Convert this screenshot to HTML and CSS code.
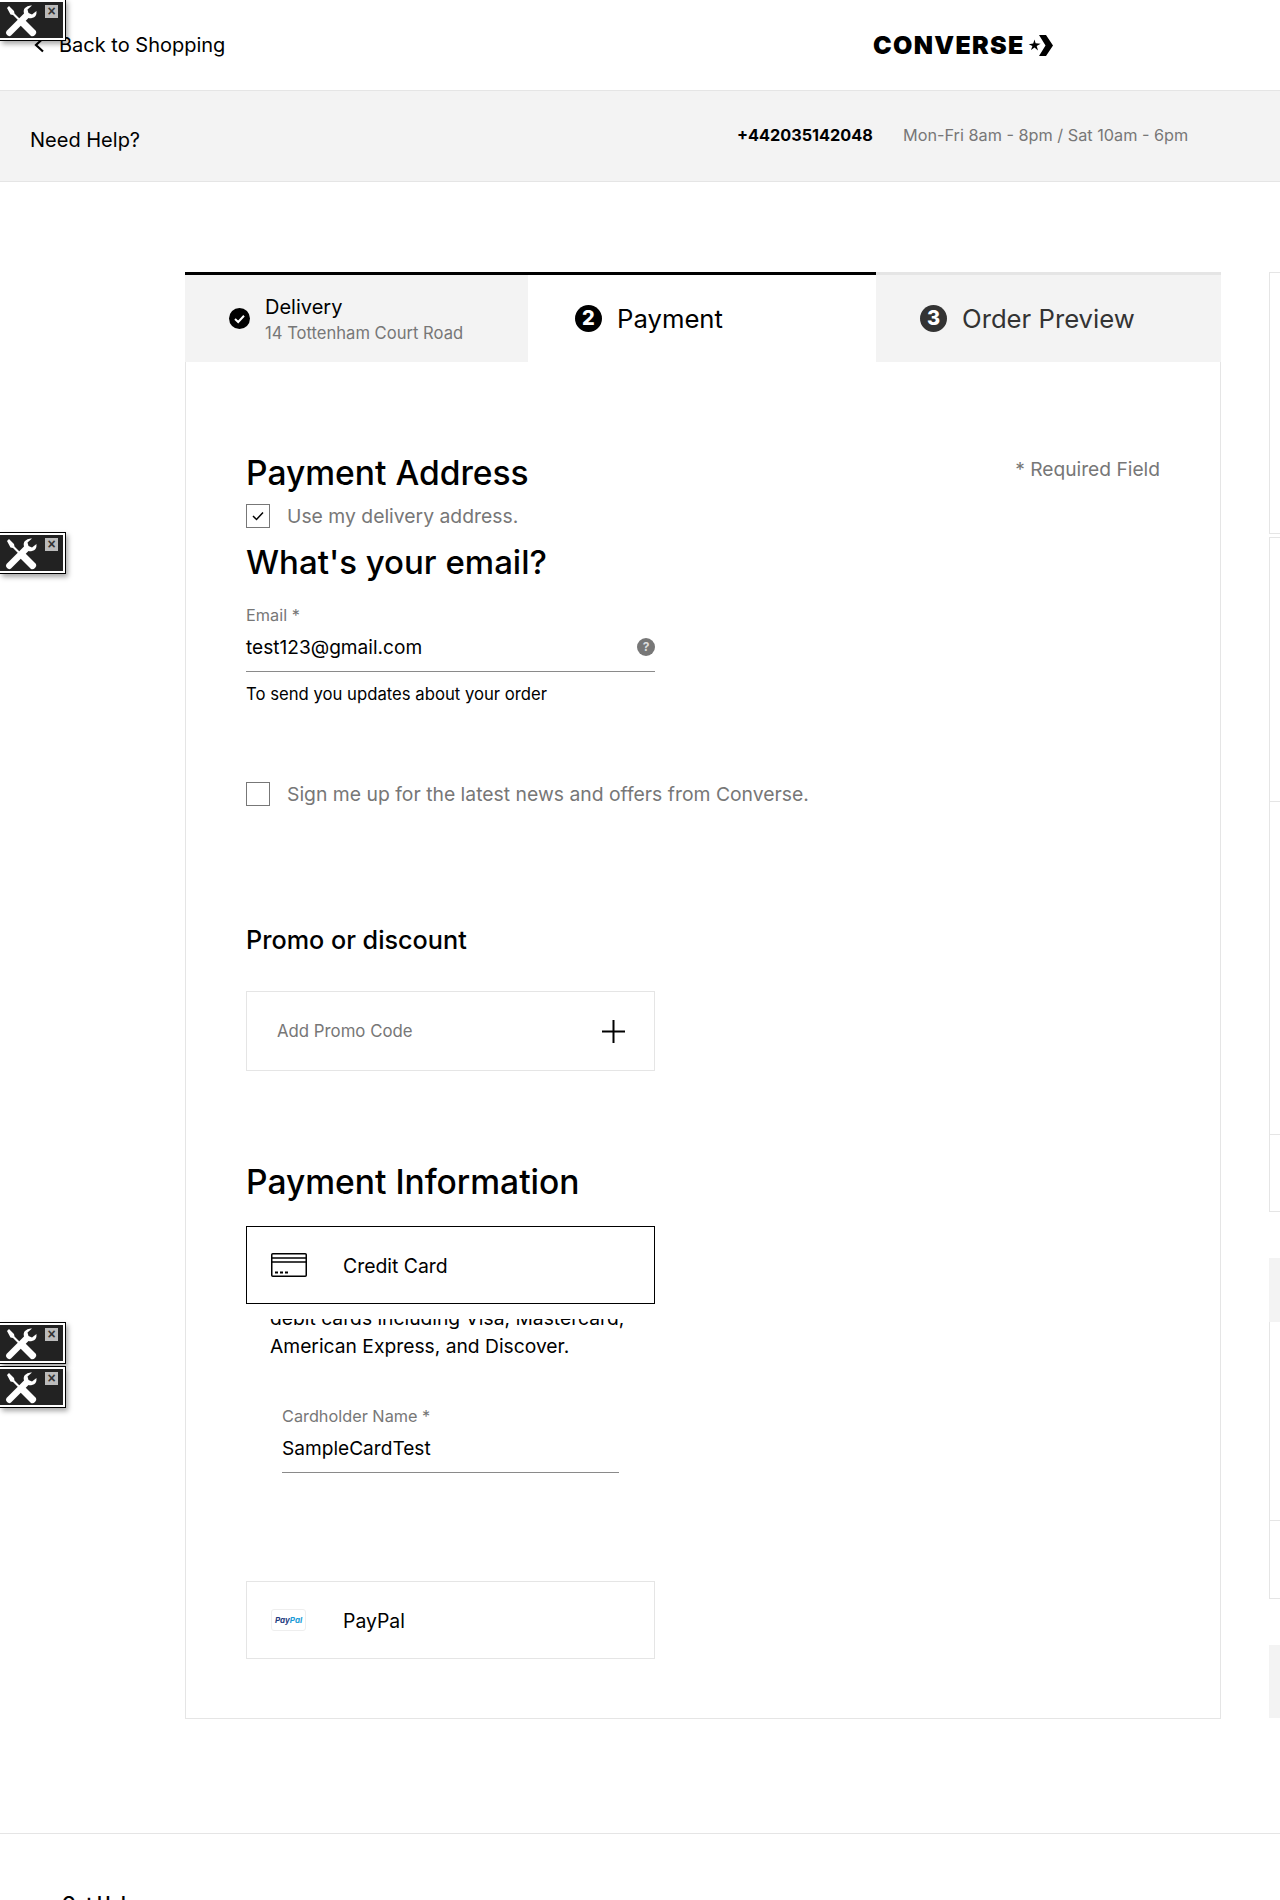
FILE: index.html
```html
<!DOCTYPE html>
<html lang="en">
<head>
<meta charset="utf-8">
<title>Converse Checkout</title>
<link rel="stylesheet" href="styles.css">
</head>
<body>
<svg class="defs" width="0" height="0" aria-hidden="true">
  <symbol id="tools" viewBox="0 0 32 32">
    <path d="M2 3 L4 1 L9 6 L9.5 8.5 L19 18 L17.5 19.5 L8 10 L5.5 9.5 Z" fill="#fff"/>
    <path d="M18 17 L20 15 L31 26 Q32 28 30 30 Q28 32 26 31 L15 20 Z" fill="#fff"/>
    <path d="M31.5 6 Q32 12 27 13 Q25 13.5 23.5 13 L6 30.5 Q4 32 2 30 Q0 28 1.5 26 L19 8.5 Q18 5 20 3 Q22.5 0 27 0.5 L22.5 4.5 L23.5 8 L27 9.5 Z" fill="#fff"/>
  </symbol>
</svg>

<div class="devtool devtool-a"><svg class="devtool-icon"><use href="#tools"/></svg><span class="devtool-close">×</span></div>
<div class="devtool devtool-b"><svg class="devtool-icon"><use href="#tools"/></svg><span class="devtool-close">×</span></div>
<div class="devtool devtool-c"><svg class="devtool-icon"><use href="#tools"/></svg><span class="devtool-close">×</span></div>
<div class="devtool devtool-d"><svg class="devtool-icon"><use href="#tools"/></svg><span class="devtool-close">×</span></div>

<header class="topbar">
  <a class="back">
    <svg class="back-arrow" viewBox="0 0 10 16"><path d="M9 1.5 L2 8 L9 14.5" fill="none" stroke="#000" stroke-width="2.2"/></svg>
    <span>Back to Shopping</span>
  </a>
  <div class="logo">
    <span class="logo-word">CONVERSE</span>
    <svg class="logo-mark" viewBox="0 0 25 21">
      <path d="M11 0 H18 L25 10.5 L18 21 H11 L17.5 10.5 Z" fill="#000"/>
      <path d="M6.5 4.6 L7.6 8.2 L12.6 8.7 L8.7 11 L10 15.6 L6.5 12.6 L3 15 L4.4 11 L0.6 9.2 L5.2 8.4 Z" fill="#000"/>
    </svg>
  </div>
</header>

<section class="helpbar">
  <h2 class="help-title">Need Help?</h2>
  <div class="help-contact">
    <span class="help-phone">+442035142048</span>
    <span class="help-hours">Mon-Fri 8am - 8pm / Sat 10am - 6pm</span>
  </div>
</section>

<main class="layout">
  <section class="checkout">
    <nav class="tabs">
      <div class="tab tab-done">
        <svg class="tab-check" viewBox="0 0 21 21"><circle cx="10.5" cy="10.5" r="10.5" fill="#000"/><path d="M6 11 L9.2 14 L15 7.8" fill="none" stroke="#fff" stroke-width="2"/></svg>
        <div class="tab-stack">
          <span class="tab-name">Delivery</span>
          <span class="tab-sub">14 Tottenham Court Road</span>
        </div>
      </div>
      <div class="tab tab-active">
        <span class="tab-num">2</span>
        <span class="tab-big">Payment</span>
      </div>
      <div class="tab tab-next">
        <span class="tab-num tab-num-muted">3</span>
        <span class="tab-big">Order Preview</span>
      </div>
    </nav>

    <div class="panel">
      <div class="title-row">
        <h1 class="h-large">Payment Address</h1>
        <span class="required">* Required Field</span>
      </div>
      <label class="check-row check-row-first">
        <span class="checkbox"><svg class="tick" viewBox="0 0 12 10"><path d="M1 5 L4.5 8.5 L11 1.5" fill="none" stroke="#000" stroke-width="1.5"/></svg></span>
        <span class="check-label">Use my delivery address.</span>
      </label>
      <h2 class="h-large h-email">What's your email?</h2>

      <div class="field field-email">
        <span class="field-label">Email *</span>
        <div class="field-value-row">
          <span class="field-value">test123@gmail.com</span>
          <span class="help-dot">?</span>
        </div>
      </div>
      <p class="field-note">To send you updates about your order</p>

      <label class="check-row check-row-news">
        <span class="checkbox"></span>
        <span class="check-label">Sign me up for the latest news and offers from Converse.</span>
      </label>

      <h2 class="h-medium">Promo or discount</h2>
      <div class="promo">
        <span class="promo-label">Add Promo Code</span>
        <svg class="promo-plus" viewBox="0 0 23 23"><path d="M11.5 0 V23 M0 11.5 H23" stroke="#000" stroke-width="2" fill="none"/></svg>
      </div>

      <h2 class="h-large h-payinfo">Payment Information</h2>
      <div class="pay-option pay-option-selected">
        <svg class="card-icon" viewBox="0 0 36 24"><rect x="0.75" y="0.75" width="34.5" height="22.5" rx="1" fill="none" stroke="#000" stroke-width="1.5"/><path d="M1 5 H35 M1 9 H35" stroke="#000" stroke-width="1.5"/><path d="M4 19.5 H7 M9 19.5 H12 M14 19.5 H17" stroke="#000" stroke-width="2"/></svg>
        <span class="pay-name">Credit Card</span>
      </div>
      <div class="pay-details">
        <p class="pay-copy">debit cards including Visa, Mastercard,<br>American Express, and Discover.</p>
      </div>
      <div class="field field-card">
        <span class="field-label">Cardholder Name *</span>
        <div class="field-value-row">
          <span class="field-value">SampleCardTest</span>
        </div>
      </div>
      <div class="pay-option pay-option-paypal">
        <span class="paypal-badge"><b class="pp-dark">Pay</b><b class="pp-light">Pal</b></span>
        <span class="pay-name">PayPal</span>
      </div>
    </div>
  </section>

  <aside class="summary">
    <div class="side-box side-box-a"></div>
    <div class="side-box side-box-b"><div class="side-cell side-cell-1"></div><div class="side-cell side-cell-2"></div><div class="side-cell side-cell-3"></div></div>
    <div class="side-head side-head-a"></div>
    <div class="side-box side-box-c"><div class="side-cell side-cell-4"></div><div class="side-cell side-cell-5"></div></div>
    <div class="side-head side-head-b"></div>
  </aside>
</main>

<footer class="footer">
  <h3 class="footer-title">Get Help</h3>
</footer>
</body>
</html>
```
FILE: styles.css
```css
* { box-sizing: border-box; }
html, body { margin: 0; padding: 0; }
body {
  height: 1900px;
  overflow: hidden;
  background: #fff;
  color: #000;
  font-family: "Inter", "Liberation Sans", sans-serif;
  position: relative;
}
.defs { position: absolute; }
h1, h2, h3, p { margin: 0; font-weight: normal; }

/* floating dev widgets */
.devtool {
  position: absolute;
  left: 0;
  width: 66px;
  height: 42px;
  background: #222;
  border: 1px solid #000;
  border-left: 0;
  box-shadow: inset 0 2px 0 #fff, inset -2px -2px 0 #fff, 2px 3px 5px rgba(0,0,0,.35);
}
.devtool-a { top: -1px; }
.devtool-b { top: 532px; }
.devtool-c { top: 1322px; }
.devtool-d { top: 1366px; }
.devtool-icon { position: absolute; left: 5px; top: 5px; width: 32px; height: 32px; }
.devtool-close {
  position: absolute;
  left: 45px;
  top: 5px;
  width: 13px;
  height: 13px;
  background: #bbb;
  color: #333;
  font: bold 14px/12px "Liberation Sans", sans-serif;
  text-align: center;
}

/* header */
.topbar {
  height: 91px;
  border-bottom: 1px solid #e5e5e5;
  display: grid;
  grid-template-columns: 839px auto;
  align-items: center;
  justify-content: start;
  padding-left: 34px;
}
.back { display: flex; align-items: center; font-size: 20px; line-height: 24px; }
.back-arrow { width: 10px; height: 16px; margin-right: 15px; }
.logo { display: flex; align-items: center; }
.logo-word { font-weight: 900; font-size: 25px; letter-spacing: 1.3px; line-height: 24px; }
.logo-mark { width: 25px; height: 21px; margin-left: 3px; }

.helpbar {
  height: 91px;
  background: #f3f3f3;
  border-bottom: 1px solid #e5e5e5;
  display: grid;
  grid-template-columns: 707px auto;
  justify-content: start;
  align-items: start;
  padding: 36px 0 0 30px;
}
.help-title { font-size: 20px; line-height: 26px; }
.help-contact { display: flex; margin-top: -4px; line-height: 24px; font-size: 16.25px; }
.help-phone { font-weight: 700; width: 166px; }
.help-hours { color: #777; }

/* layout */
.layout { display: flex; padding: 90px 0 0 185px; gap: 48px; width: 1600px; }
.checkout { width: 1036px; flex: none; }
.tabs { display: flex; height: 90px; }
.tab { display: flex; align-items: center; border-top: 3px solid #000; }
.tab-done { width: 343px; background: #f3f3f3; padding-left: 44px; }
.tab-active { width: 348px; padding-left: 47px; }
.tab-next { width: 345px; background: #f3f3f3; border-top-color: #e5e5e5; padding-left: 44px; color: #333; }
.tab-check { width: 21px; height: 21px; margin-right: 15px; }
.tab-stack { display: flex; flex-direction: column; padding-top: 2px; }
.tab-name { font-size: 20px; line-height: 26px; }
.tab-sub { font-size: 16.6px; line-height: 26px; color: #777; }
.tab-num {
  width: 27px;
  height: 27px;
  border-radius: 50%;
  background: #000;
  color: #fff;
  font-size: 20px;
  font-weight: 800;
  line-height: 27px;
  text-align: center;
  margin-right: 15px;
}
.tab-num-muted { background: #333; }
.tab-big { font-size: 25.7px; line-height: 34px; }

.panel {
  border: 1px solid #e5e5e5;
  border-top: 0;
  padding: 91px 60px 60px;
  height: 1357px;
}
.title-row { display: flex; justify-content: space-between; align-items: flex-start; }
.h-large { font-size: 33.6px; line-height: 40px; font-weight: 500; }
.required { font-size: 19.2px; line-height: 24px; color: #777; margin-top: 4px; }
.check-row { display: flex; align-items: center; }
.check-row-first { margin-top: 11px; }
.check-row-news { margin-top: 78px; }
.checkbox {
  width: 24px;
  height: 24px;
  border: 1px solid #777;
  display: flex;
  align-items: center;
  justify-content: center;
  margin-right: 17px;
}
.tick { width: 12px; height: 10px; }
.check-label { font-size: 19.35px; line-height: 24px; color: #777; }
.h-email { margin-top: 14px; font-size: 33px; }

.field { width: 409px; }
.field-email { margin-top: 23px; }
.field-label { display: block; font-size: 16.3px; line-height: 20px; color: #777; }
.field-value-row {
  display: flex;
  justify-content: space-between;
  align-items: center;
  margin-top: 8px;
  padding-bottom: 10px;
  border-bottom: 1px solid #8a8a8a;
}
.field-value { font-size: 19.1px; line-height: 28px; }
.help-dot {
  width: 18px;
  height: 18px;
  border-radius: 50%;
  background: #777;
  color: #ddd;
  font-size: 12px;
  font-weight: 700;
  line-height: 18px;
  text-align: center;
}
.field-note { margin-top: 12px; font-size: 16.7px; line-height: 20px; }

.h-medium { margin-top: 118px; font-size: 25.2px; line-height: 32px; font-weight: 500; }
.promo {
  margin-top: 35px;
  width: 409px;
  height: 80px;
  border: 1px solid #e5e5e5;
  display: flex;
  align-items: center;
  justify-content: space-between;
  padding: 0 29px 0 30px;
}
.promo-label { font-size: 16.8px; color: #777; }
.promo-plus { width: 23px; height: 23px; }

.h-payinfo { margin-top: 91px; }
.pay-option {
  width: 409px;
  height: 78px;
  display: flex;
  align-items: center;
  padding-left: 24px;
  border: 1px solid #e5e5e5;
}
.pay-option-selected { margin-top: 24px; border-color: #000; }
.pay-option-paypal { margin-top: 108px; }
.card-icon { width: 36px; height: 24px; margin-right: 36px; }
.pay-name { font-size: 19.4px; line-height: 28px; padding-top: 2px; }
.pay-details { margin-top: 15px; padding-left: 24px; width: 409px; height: 41px; overflow: hidden; }
.pay-copy { margin-top: -15px; font-size: 19.25px; line-height: 28px; white-space: nowrap; }
.field-card { margin: 46px 0 0 36px; width: 337px; }
.paypal-badge {
  width: 35px;
  height: 22px;
  border: 1px solid #eee;
  border-radius: 3px;
  margin-right: 37px;
  font-size: 8px;
  line-height: 20px;
  text-align: center;
  font-style: italic;
}
.pp-dark { color: #253b80; }
.pp-light { color: #179bd7; }

/* summary column */
.summary { width: 340px; flex: none; }
.side-box { border: 1px solid #e5e5e5; border-right: 0; }
.side-box-a { height: 262px; }
.side-box-b { height: 675px; margin-top: 3px; }
.side-head { background: #f3f3f3; }
.side-head-a { height: 64px; margin-top: 46px; }
.side-box-c { height: 277px; border-top: 0; }
.side-head-b { height: 73px; margin-top: 46px; }
.side-cell-1 { height: 263px; border-bottom: 0; }
.side-cell-2 { height: 333px; border-top: 1px solid #e5e5e5; }
.side-cell-3 { border-top: 1px solid #e5e5e5; }
.side-cell-4 { height: 199px; border-bottom: 1px solid #e5e5e5; }

.footer { margin-top: 114px; border-top: 1px solid #e5e5e5; padding: 57px 0 0 62px; }
.footer-title { font-size: 18px; line-height: 26px; font-weight: 600; }
```
